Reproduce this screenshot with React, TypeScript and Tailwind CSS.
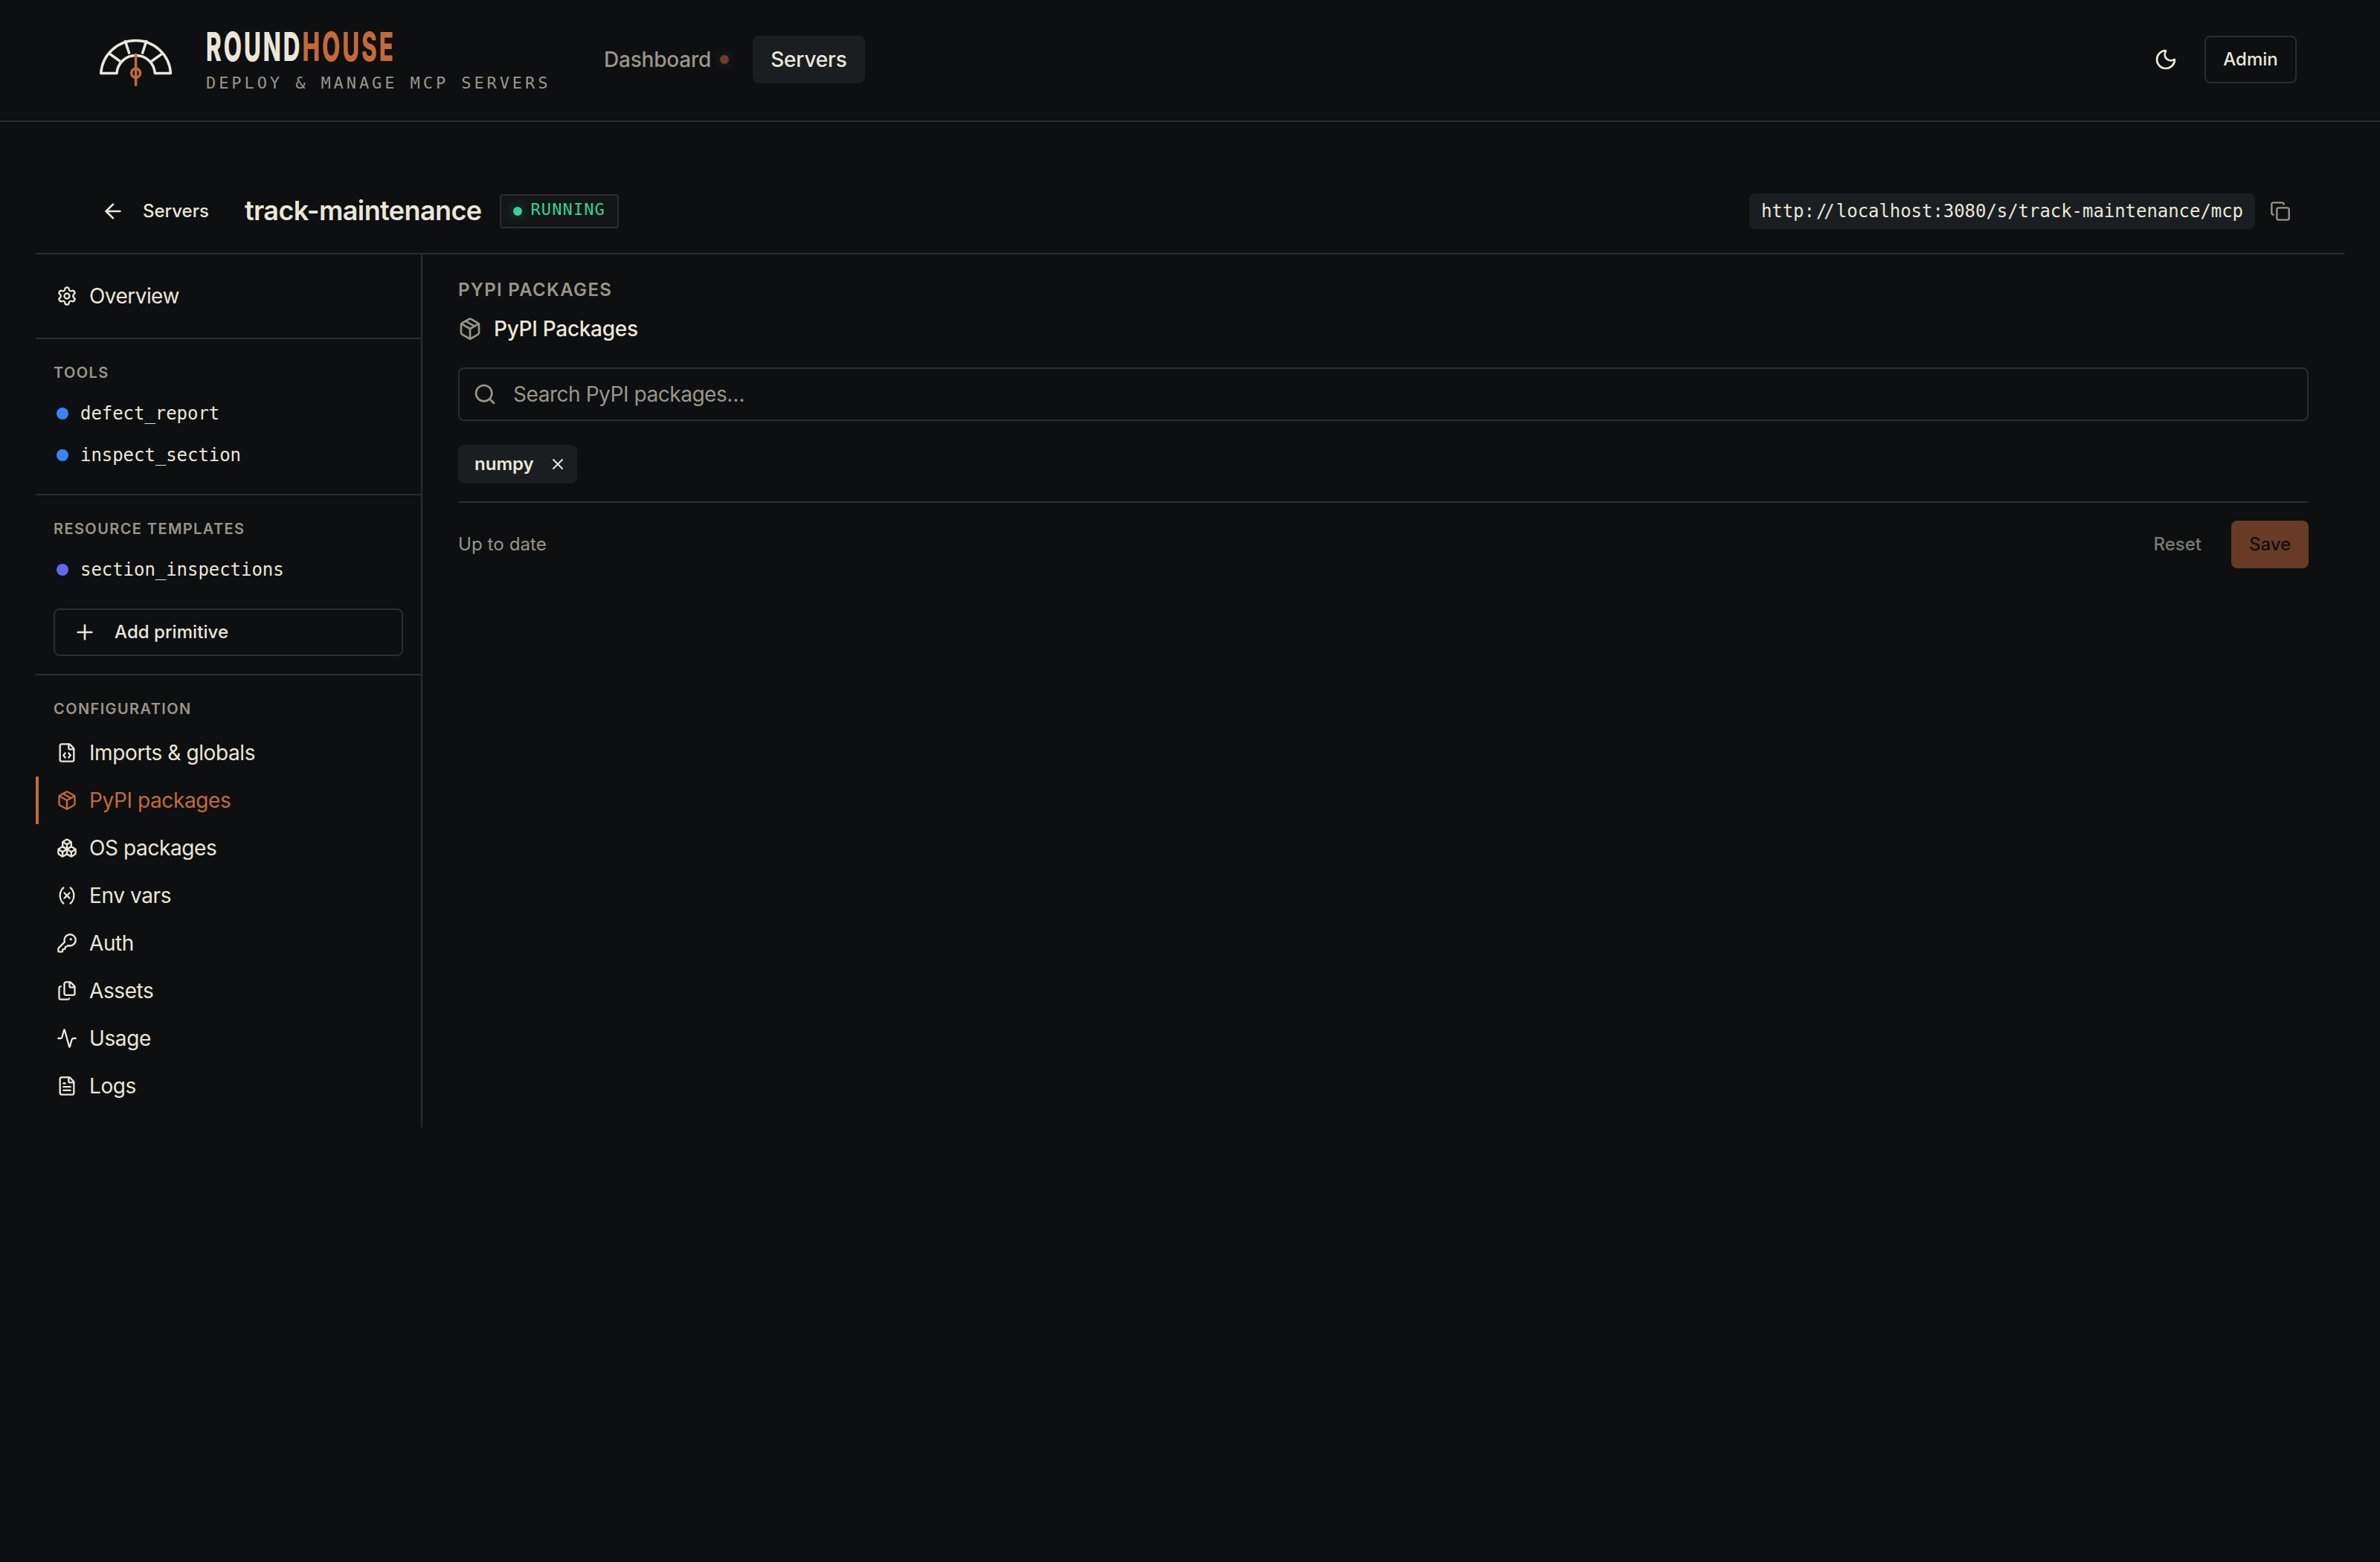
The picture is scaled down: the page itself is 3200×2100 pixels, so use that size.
import { useState } from 'react';
import type { LucideIcon } from 'lucide-react';
import {
  Activity,
  ArrowLeft,
  Boxes,
  Copy,
  FileCode,
  FileText,
  Files,
  KeyRound,
  Moon,
  Package,
  Plus,
  Search,
  Settings,
  Variable,
  X,
} from 'lucide-react';

type NavItem = { label: string; icon: LucideIcon };

const configItems: NavItem[] = [
  { label: 'Imports & globals', icon: FileCode },
  { label: 'PyPI packages', icon: Package },
  { label: 'OS packages', icon: Boxes },
  { label: 'Env vars', icon: Variable },
  { label: 'Auth', icon: KeyRound },
  { label: 'Assets', icon: Files },
  { label: 'Usage', icon: Activity },
  { label: 'Logs', icon: FileText },
];

const tools = ['defect_report', 'inspect_section'];
const templates = ['section_inspections'];

function Logo() {
  return (
    <svg viewBox="0 -1 104 72" className="h-[72px] w-[104px] shrink-0" fill="none">
      <g stroke="#ebe6da" strokeWidth="3.5" strokeLinejoin="round">
        <path d="M5.7 53.5 A47 47 0 0 1 99.5 53.5 H78.3 A25.7 25.7 0 0 0 27 53.5 Z" />
        <path d="M15.7 26.1 L31.7 37.5 M38 9.1 L44 27.5 M67.2 9.1 L61.2 27.5 M89.5 26.1 L73.5 37.5" />
      </g>
      <g stroke="#c46a3a" strokeWidth="3.5">
        <path d="M52.6 28 V69.2" strokeLinecap="round" />
        <circle cx="52.6" cy="53.3" r="6" />
      </g>
    </svg>
  );
}

function Header() {
  return (
    <header className="flex h-[164px] items-center border-b-2 border-[#2a2c32] pb-0.5 pl-[130px] pr-28">
      <Logo />
      <div className="ml-[43px] flex w-[460px] flex-col">
        <div className="flex h-[54px] w-[260px] items-center">
          <span className="-mt-0.5 origin-left scale-x-[0.58] whitespace-nowrap text-[54px] font-extrabold leading-none tracking-[0.097em]">
            ROUND<span className="text-[#c46a3a]">HOUSE</span>
          </span>
        </div>
        <span className="-mb-1 mt-1.5 whitespace-nowrap font-['DejaVu_Sans_Mono',monospace] text-[22px] leading-[30px] tracking-[0.178em] text-[#9a958a]">
          DEPLOY &amp; MANAGE MCP SERVERS
        </span>
      </div>
      <nav className="ml-[51px] flex items-center gap-2 text-[28px] font-medium tracking-[-0.2px]">
        <a className="flex h-16 items-center gap-3 px-6 text-[#9a958a]">
          Dashboard
          <span className="size-3 rounded-full bg-[#6d3d26] shadow-[0_0_16px_4px_rgba(255,255,255,0.06)]" />
        </a>
        <a className="flex h-16 items-center rounded-lg bg-[#1a1e21] px-6">Servers</a>
      </nav>
      <div className="ml-auto flex items-center gap-9">
        <Moon className="size-8" />
        <button className="h-16 w-[124px] rounded-lg border-2 border-[#2a2c32] text-[24px] font-medium">Admin</button>
      </div>
    </header>
  );
}

function ServerBar() {
  return (
    <div className="flex h-[114px] items-center border-b-2 border-[#2a2c32] pl-[88px] pr-[72px]">
      <a className="flex items-center gap-6 text-[24px] font-medium">
        <ArrowLeft className="size-8" />
        Servers
      </a>
      <h1 className="mb-0.5 ml-12 text-[36px] font-semibold tracking-[-0.6px]">track-maintenance</h1>
      <span className="ml-6 flex h-[46px] w-40 items-center gap-3 rounded border-2 border-[#2a2c32] bg-[#131516] px-4">
        <span className="size-3 shrink-0 rounded-full bg-[#34d399] shadow-[0_0_16px_rgba(52,211,153,0.4)]" />
        <span className="-mt-1 font-['DejaVu_Sans_Mono',monospace] text-[22px] leading-7 tracking-[0.05em] text-[#34d399]">
          RUNNING
        </span>
      </span>
      <code className="ml-auto flex h-12 items-center rounded-lg bg-[#1a1e21] px-4 font-['DejaVu_Sans_Mono',monospace] text-[24px] tracking-[-0.05px]">
        http:<span className="ml-0.5 mr-1.5 tracking-[-4px]">//</span>localhost:3080/s/track-maintenance/mcp
      </code>
      <Copy className="ml-5 size-7 text-[#9a958a]" />
    </div>
  );
}

function SectionLabel({ children }: { children: string }) {
  return <h3 className="px-6 text-[20px] font-semibold uppercase leading-7 tracking-[0.07em] text-[#9a958a]">{children}</h3>;
}

function PrimitiveRow({ name, dot }: { name: string; dot: string }) {
  return (
    <li className="flex h-14 items-center gap-4 pl-7 font-['DejaVu_Sans_Mono',monospace] text-[24px] tracking-[-0.05px]">
      <span className={`size-4 rounded-full ${dot}`} />
      {name}
    </li>
  );
}

function Sidebar() {
  const [active, setActive] = useState('PyPI packages');

  return (
    <aside className="flex h-[1174px] w-[520px] shrink-0 flex-col border-r-2 border-[#2a2c32]">
      <div className="flex h-[114px] items-center gap-4 border-b-2 border-[#2a2c32] pl-7 text-[28px] tracking-[-0.55px]">
        <Settings className="size-7" />
        Overview
      </div>

      <div className="h-[210px] border-b-2 border-[#2a2c32] pt-[31px]">
        <SectionLabel>Tools</SectionLabel>
        <ul className="mt-[13px]">
          {tools.map((name) => (
            <PrimitiveRow key={name} name={name} dot="bg-[#3b82f6]" />
          ))}
        </ul>
      </div>

      <div className="h-[242px] border-b-2 border-[#2a2c32] pt-[31px]">
        <SectionLabel>Resource Templates</SectionLabel>
        <ul className="mt-[13px]">
          {templates.map((name) => (
            <PrimitiveRow key={name} name={name} dot="bg-[#6366f1]" />
          ))}
        </ul>
        <button className="mx-6 mt-6 flex h-16 w-[470px] items-center gap-6 rounded-lg border-2 border-[#2a2c32] px-6 text-[24px] font-medium tracking-[0.05px]">
          <Plus className="size-8" />
          Add primitive
        </button>
      </div>

      <div className="pt-[31px]">
        <SectionLabel>Configuration</SectionLabel>
        <ul className="mt-[13px]">
          {configItems.map(({ label, icon: Icon }) => (
            <li
              key={label}
              onClick={() => setActive(label)}
              className={`flex h-16 cursor-pointer items-center gap-4 border-l-4 pl-6 text-[28px] tracking-[-0.4px] ${
                active === label ? 'border-[#c46a3a] text-[#c46a3a]' : 'border-transparent'
              }`}
            >
              <Icon className="size-7" />
              {label}
            </li>
          ))}
        </ul>
      </div>
    </aside>
  );
}

function PackagesPanel() {
  return (
    <section className="min-w-0 flex-1 pl-12 pr-12 pt-8">
      <h2 className="text-[24px] font-semibold uppercase leading-8 tracking-[0.055em] text-[#9a958a]">PyPI Packages</h2>
      <div className="mt-4 flex h-10 items-center gap-4 text-[28px] font-medium tracking-[-0.3px]">
        <Package className="size-8 text-[#9a958a]" />
        PyPI Packages
      </div>
      <div className="mt-8 flex h-[72px] items-center gap-[22px] rounded-lg border-2 border-[#2a2c32] px-[18px] text-[28px]">
        <Search className="size-8 text-[#9a958a]" />
        <input
          className="flex-1 bg-transparent tracking-[-0.45px] outline-none placeholder:text-[#9a958a]"
          placeholder="Search PyPI packages…"
        />
      </div>
      <div className="mt-8 flex">
        <span className="flex h-[52px] w-40 items-center justify-between rounded-lg bg-[#1a1e21] pl-[22px] pr-3.5 text-[24px] font-semibold">
          numpy
          <X className="size-6" />
        </span>
      </div>
      <div className="mt-6 flex items-center border-t-2 border-[#2a2c32] pt-6">
        <span className="text-[24px] tracking-[0.1px] text-[#9a958a]">Up to date</span>
        <button className="ml-auto h-16 px-6 text-[24px] font-medium text-[#7c7a75]">Reset</button>
        <button className="ml-4 h-16 w-[104px] rounded-lg bg-[#683b25] text-[24px] font-medium text-[#0d0f10]">Save</button>
      </div>
    </section>
  );
}

export default function App() {
  return (
    <div className="min-h-screen bg-[#0d0f10] font-['Inter',sans-serif] text-[#ebe6da]">
      <Header />
      <main className="px-12 pt-16">
        <ServerBar />
        <div className="flex">
          <Sidebar />
          <PackagesPanel />
        </div>
      </main>
    </div>
  );
}
